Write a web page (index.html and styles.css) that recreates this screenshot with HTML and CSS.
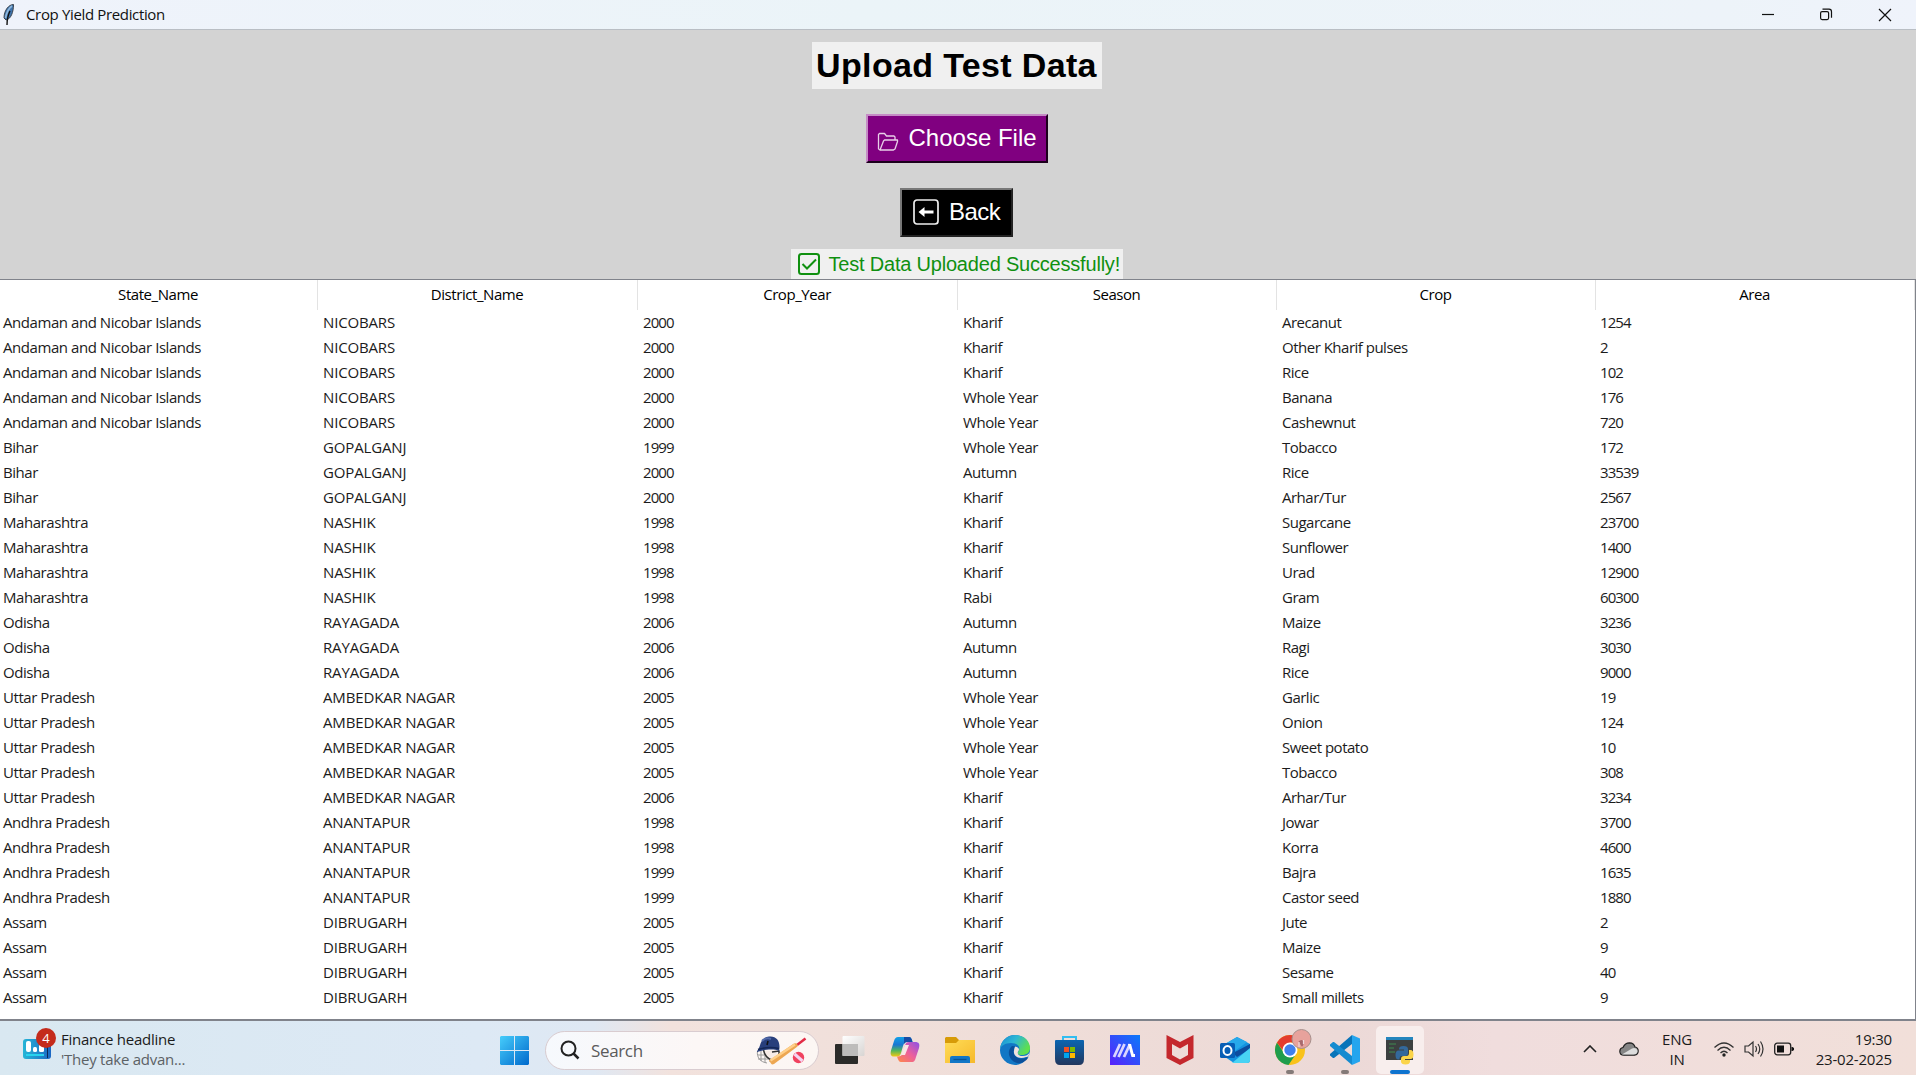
FILE: index.html
```html
<!DOCTYPE html>
<html lang="en">
<head>
<meta charset="utf-8">
<title>Crop Yield Prediction</title>
<link rel="stylesheet" href="styles.css">
</head>
<body>
<div class="window">
<header class="titlebar">
  <svg class="feather" width="16" height="22" viewBox="0 0 16 22"><path d="M13.500 1.500C9 1.500 4 7 4 15l2 2C11 16 13.500 9 13.500 1.500z" fill="#3f74ad" stroke="#3b434c" stroke-width="1"/><path d="M12 3C9 5 6.500 10 5.500 15" stroke="#8fb8dd" stroke-width="1.600" fill="none"/><path d="M10 8C8 12 7 15 7 22" stroke="#111" stroke-width="1.400" fill="none"/></svg>
  <h1 class="caption">Crop Yield Prediction</h1>
  <svg class="controls" width="130" height="14" viewBox="0 0 130 14" fill="none" stroke="#111" stroke-width="1.2"><path d="M0 6.5h12"/><rect x="58.600" y="3.600" width="8" height="8" rx="1.500"/><path d="M60.500 1.200h6.500a2.500 2.500 0 0 1 2.500 2.500v6"/><path d="M117 1l12 12M129 1l-12 12"/></svg>
</header>
<main class="panel">
  <h2 class="heading"><span>Upload Test Data</span></h2>
  <button class="btn choose"><svg width="22" height="20" viewBox="0 0 22 20" fill="none" stroke="#e8cfe8" stroke-width="1.300" stroke-linejoin="round"><path d="M3.500 18L1.500 17V2.500L2.500 1.500h5l2 2.500h7.500l1 1v3"/><path d="M3 18L6.500 9l1-1h13v1.500L18 17l-1.500 1z"/></svg><span>Choose File</span></button>
  <button class="btn back"><svg width="26" height="26" viewBox="0 0 26 26"><rect x="1" y="1" width="24" height="24" rx="3" fill="none" stroke="#eee" stroke-width="1.700"/><path d="M5.500 13l6-5v3.500h9v3h-9V18z" fill="#fff"/></svg><span>Back</span></button>
  <p class="status"><svg width="22" height="22" viewBox="0 0 22 22" fill="none" stroke="#109010" stroke-width="2"><rect x="1" y="1" width="20" height="20" rx="2.500"/><path d="M4.500 11l4.500 4.500 9-9"/></svg><span>Test Data Uploaded Successfully!</span></p>
</main>
<table class="grid">
<thead><tr><th>State_Name</th><th>District_Name</th><th>Crop_Year</th><th>Season</th><th>Crop</th><th>Area</th></tr></thead>
<tbody>
<tr><td>Andaman and Nicobar Islands</td><td>NICOBARS</td><td>2000</td><td>Kharif</td><td>Arecanut</td><td>1254</td></tr>
<tr><td>Andaman and Nicobar Islands</td><td>NICOBARS</td><td>2000</td><td>Kharif</td><td>Other Kharif pulses</td><td>2</td></tr>
<tr><td>Andaman and Nicobar Islands</td><td>NICOBARS</td><td>2000</td><td>Kharif</td><td>Rice</td><td>102</td></tr>
<tr><td>Andaman and Nicobar Islands</td><td>NICOBARS</td><td>2000</td><td>Whole Year</td><td>Banana</td><td>176</td></tr>
<tr><td>Andaman and Nicobar Islands</td><td>NICOBARS</td><td>2000</td><td>Whole Year</td><td>Cashewnut</td><td>720</td></tr>
<tr><td>Bihar</td><td>GOPALGANJ</td><td>1999</td><td>Whole Year</td><td>Tobacco</td><td>172</td></tr>
<tr><td>Bihar</td><td>GOPALGANJ</td><td>2000</td><td>Autumn</td><td>Rice</td><td>33539</td></tr>
<tr><td>Bihar</td><td>GOPALGANJ</td><td>2000</td><td>Kharif</td><td>Arhar/Tur</td><td>2567</td></tr>
<tr><td>Maharashtra</td><td>NASHIK</td><td>1998</td><td>Kharif</td><td>Sugarcane</td><td>23700</td></tr>
<tr><td>Maharashtra</td><td>NASHIK</td><td>1998</td><td>Kharif</td><td>Sunflower</td><td>1400</td></tr>
<tr><td>Maharashtra</td><td>NASHIK</td><td>1998</td><td>Kharif</td><td>Urad</td><td>12900</td></tr>
<tr><td>Maharashtra</td><td>NASHIK</td><td>1998</td><td>Rabi</td><td>Gram</td><td>60300</td></tr>
<tr><td>Odisha</td><td>RAYAGADA</td><td>2006</td><td>Autumn</td><td>Maize</td><td>3236</td></tr>
<tr><td>Odisha</td><td>RAYAGADA</td><td>2006</td><td>Autumn</td><td>Ragi</td><td>3030</td></tr>
<tr><td>Odisha</td><td>RAYAGADA</td><td>2006</td><td>Autumn</td><td>Rice</td><td>9000</td></tr>
<tr><td>Uttar Pradesh</td><td>AMBEDKAR NAGAR</td><td>2005</td><td>Whole Year</td><td>Garlic</td><td>19</td></tr>
<tr><td>Uttar Pradesh</td><td>AMBEDKAR NAGAR</td><td>2005</td><td>Whole Year</td><td>Onion</td><td>124</td></tr>
<tr><td>Uttar Pradesh</td><td>AMBEDKAR NAGAR</td><td>2005</td><td>Whole Year</td><td>Sweet potato</td><td>10</td></tr>
<tr><td>Uttar Pradesh</td><td>AMBEDKAR NAGAR</td><td>2005</td><td>Whole Year</td><td>Tobacco</td><td>308</td></tr>
<tr><td>Uttar Pradesh</td><td>AMBEDKAR NAGAR</td><td>2006</td><td>Kharif</td><td>Arhar/Tur</td><td>3234</td></tr>
<tr><td>Andhra Pradesh</td><td>ANANTAPUR</td><td>1998</td><td>Kharif</td><td>Jowar</td><td>3700</td></tr>
<tr><td>Andhra Pradesh</td><td>ANANTAPUR</td><td>1998</td><td>Kharif</td><td>Korra</td><td>4600</td></tr>
<tr><td>Andhra Pradesh</td><td>ANANTAPUR</td><td>1999</td><td>Kharif</td><td>Bajra</td><td>1635</td></tr>
<tr><td>Andhra Pradesh</td><td>ANANTAPUR</td><td>1999</td><td>Kharif</td><td>Castor seed</td><td>1880</td></tr>
<tr><td>Assam</td><td>DIBRUGARH</td><td>2005</td><td>Kharif</td><td>Jute</td><td>2</td></tr>
<tr><td>Assam</td><td>DIBRUGARH</td><td>2005</td><td>Kharif</td><td>Maize</td><td>9</td></tr>
<tr><td>Assam</td><td>DIBRUGARH</td><td>2005</td><td>Kharif</td><td>Sesame</td><td>40</td></tr>
<tr><td>Assam</td><td>DIBRUGARH</td><td>2005</td><td>Kharif</td><td>Small millets</td><td>9</td></tr>
</tbody>
</table>
</div>
<footer class="taskbar">
  <div class="widget">
    <div class="widget-icon">
      <svg width="28" height="20" viewBox="0 0 28 20"><defs><linearGradient id="wg"><stop offset="0" stop-color="#26b5d6"/><stop offset="1" stop-color="#1b67c4"/></linearGradient></defs><rect width="28" height="20" rx="3" fill="url(#wg)"/><rect x="3" y="2" width="5" height="11" rx="2" fill="#fff"/><rect x="10" y="8" width="4" height="5" rx="1.500" fill="#fff"/><rect x="16" y="5" width="5" height="8" rx="1.500" fill="#fff"/><path d="M3 16h18" stroke="#27d3ee" stroke-width="2"/><path d="M24.500 8v11" stroke="#0b2957"/></svg>
      <span class="badge">4</span>
    </div>
    <div class="widget-text"><div class="w1">Finance headline</div><div class="w2">'They take advan...</div></div>
  </div>
  <div class="apps">
    <svg class="start" width="29" height="29" viewBox="0 0 29 29"><defs><linearGradient id="win" x2="1" y2="1"><stop offset="0" stop-color="#46cdfb"/><stop offset="1" stop-color="#0069cc"/></linearGradient></defs><path d="M1 0H14V14H0V1zM15 0H28L29 1V14H15zM0 15H14V29H1L0 28zM15 15H29V28L28 29H15z" fill="url(#win)"/></svg>
    <div class="search">
      <svg width="20" height="20" viewBox="0 0 20 20" fill="none" stroke="#222" stroke-width="2"><circle cx="8.500" cy="8.500" r="7"/><path d="M13.500 13.500l5 5" stroke-width="2.500"/></svg>
      <span>Search</span>
      <svg class="cricket" width="52" height="32" viewBox="0 0 52 32"><g fill="none" stroke="#999" stroke-width="1"><path d="M2.500 17C1.500 23 5 28 12 29M3 21h12M3 25h13M6 17v10M10 18v11M15 18v10"/></g><path d="M8 17l13-1 1 6-6 5-5-3z" fill="#f7ece7"/><path d="M8.500 16c1 5 3 8 8 10M17 18l7-1v6" fill="none" stroke="#333" stroke-width="1.500"/><path d="M2 17C6 14 4 4 14 2.500 22 1.500 26 8 24 17c-5-2-12-2-22 1z" fill="#283f7c"/><path d="M7 7q4-4 9-2" stroke="#526aa9" stroke-width="2" fill="none"/><path d="M3 15.500c6-2 13-3 21-1" stroke="#142757" stroke-width="1.500" fill="none"/><path d="M13 7l-1 4" stroke="#111" stroke-width="1.500"/><path d="M50.500 4.500L42 11" stroke="#e22b45" stroke-width="2.500"/><path d="M14 26.500L39 9.500q4-1 3.500 3L19 30q-2 1-3-.5z" fill="#eda752"/><path d="M15.500 26.500L40 10.500" stroke="#ffd08b" stroke-width="2.500"/><circle cx="43.500" cy="23.500" r="5.700" fill="#f0425f"/><path d="M39.500 20l8 7" stroke="#f4d4f0" stroke-width="3"/></svg>
    </div>
    <div class="app"><svg width="30" height="30" viewBox="0 0 30 30"><defs><linearGradient id="tv" x2="1" y2="1"><stop offset="0" stop-color="#fff"/><stop offset="1" stop-color="#d8d5d3"/></linearGradient></defs><rect x="0" y="9" width="23" height="20" rx="1" fill="#2b2b29"/><rect x="7.500" y="1" width="22" height="20" rx="1" fill="url(#tv)"/><path d="M7.500 9H23V21H7.500z" fill="#bdbcbb"/></svg></div>
    <div class="app"><svg width="30" height="30" viewBox="0 0 30 30"><defs><linearGradient id="ca" x2="0" y2="1"><stop offset="0" stop-color="#12a1e8"/><stop offset=".4" stop-color="#1976d2"/><stop offset=".7" stop-color="#52b65b"/><stop offset="1" stop-color="#f2c811"/></linearGradient><linearGradient id="cb" x1="1" x2="0" y2="1"><stop offset="0" stop-color="#8b50e8"/><stop offset=".5" stop-color="#ec5f9c"/><stop offset="1" stop-color="#ff8b45"/></linearGradient></defs><path d="M8 2h11c2 0 3 2 3.500 5H17c-2 0-3 1-4 4l-2 7c-1 3-2 3.500-5 3.500H4c-3 0-4-2-3-6L4 6c1-3 2-4 4-4z" fill="url(#ca)"/><path d="M14 2h5c2 0 3 2 3.500 5H17q-2 0-3 2z" fill="#174ca5"/><path d="M22 27H11c-2 0-3-2-4-5.500 4 0 5-1 6-4l2-7c1-3 2-3.500 5-3.500h5c4 0 5 2 4 6l-3 9c-1 4-2 5-4 5z" fill="url(#cb)"/><path d="M15 10h4l-4 10h-4z" fill="#f8e7e7"/></svg></div>
    <div class="app"><svg width="30" height="30" viewBox="0 0 30 30"><defs><linearGradient id="fo" x2="1" y2="1"><stop offset="0" stop-color="#ffdc57"/><stop offset="1" stop-color="#f6b92b"/></linearGradient></defs><path d="M0 3l1-1h10l3 3H30v8H0z" fill="#d79b08"/><path d="M0 8h11l3-3h16v23H0z" fill="url(#fo)"/><path d="M5 28v-5q0-2 2-2h16q2 0 2 2v5z" fill="#1277c7"/><path d="M8.500 24.500h13" stroke="#075497" stroke-width="1.300"/></svg></div>
    <div class="app"><svg width="30" height="30" viewBox="0 0 30 30"><defs><linearGradient id="ed" y2=".5"><stop offset="0" stop-color="#168bd2"/><stop offset=".5" stop-color="#2eb7d4"/><stop offset="1" stop-color="#5fe04c"/></linearGradient></defs><circle cx="15" cy="15" r="15" fill="#1277c5"/><path d="M25 25l5-5v10h-8z" fill="#eddcd7"/><path d="M0 14C1 5 8 0 15 0c9 0 15 6 15 13 0 5-4 7-8 7-3 0-5-1-4-3 4-6-2-9-7-9C5 8 1 11 0 14z" fill="url(#ed)"/><path d="M12 11c-6 5-3 15 5 17 5 1 9-2 11-5 1-1 0-1-1-.500-8 3-15-1-13-8 0-2 1-3 2-3z" fill="#0b509b"/><path d="M15 11.500c4 1 5 3 3 5-1 3 1 4.500 5 4.500 3 0 5-1 7-4-1 4-2 5-4 5-7 3-13-1-12-6 0-2 1-4 1-4.500z" fill="#f1e1dc"/></svg></div>
    <div class="app"><svg width="30" height="30" viewBox="0 0 30 30"><defs><linearGradient id="st" x2="0" y2="1"><stop offset="0" stop-color="#0b65b1"/><stop offset="1" stop-color="#22375e"/></linearGradient></defs><path d="M8 7V2h13v5" fill="none" stroke="#32bdf0" stroke-width="2"/><path d="M0 6q0-1 1-1h27q1 0 1 1v18q0 6-5 6H5q-5 0-5-6z" fill="url(#st)"/><path d="M9 12h5v5H9z" fill="#f25022"/><path d="M15 12h5v5h-5z" fill="#7fba00"/><path d="M9 18h5v5H9z" fill="#00a4ef"/><path d="M15 18h5v5h-5z" fill="#ffb900"/></svg></div>
    <div class="app"><svg width="30" height="30" viewBox="0 0 30 30"><defs><linearGradient id="ma" x1="0" y1="1" x2="1" y2="0"><stop offset="0" stop-color="#5a20fb"/><stop offset="1" stop-color="#0b7bfa"/></linearGradient></defs><path d="M0 0h30v30H0z" fill="url(#ma)"/><path d="M4 22L10 9M8.500 22l6-13M14 22l6-13" stroke="#dcd6ff" stroke-width="2.800"/><path d="M18 9h3l3.500 13h-3z" fill="#fff"/><path d="M22 19h3v3h-3z" fill="#fff"/></svg></div>
    <div class="app"><svg width="30" height="30" viewBox="0 0 30 30"><path d="M1.500 0L15 7 28.500 0v23L15 30 1.500 23zM7 9v11l8 4.500 8-4.500V9l-8 4.500z" fill="#c4282d" fill-rule="evenodd"/></svg></div>
    <div class="app"><svg width="30" height="30" viewBox="0 0 30 30"><path d="M5 9L17 2l13 7v16q0 3-3 3H14L5 22z" fill="#1492df"/><path d="M5 9L17 2l10 5-12 9H5z" fill="#27a9ea"/><path d="M13 18L30 9v5L17 22z" fill="#0d4c9e"/><path d="M12 28L30 13v12q0 3-3 3z" fill="#48d3f4"/><rect y="8" width="15" height="15" rx="1.500" fill="#075eb5"/><ellipse cx="7.500" cy="15.500" rx="4" ry="4.500" fill="none" stroke="#fff" stroke-width="2"/></svg></div>
    <div class="app running"><svg class="overflowing" width="30" height="30" viewBox="0 0 30 30"><circle cx="15" cy="15" r="15" fill="#f9c21a"/><path d="M2 7.500A15 15 0 0 0 13.500 30L21 19 15 15 9 18z" fill="#1f9d4d"/><path d="M2 7.500L7.500 15 15 7.500h13A15 15 0 0 0 2 7.500z" fill="#e33b2e"/><circle cx="15" cy="15" r="7.500" fill="#fff"/><circle cx="15" cy="15" r="5.700" fill="#3f80ed"/><circle cx="26.500" cy="4" r="9.500" fill="#e7a29c" stroke="#a7908d"/><path d="M23.500 6.500q3-3 5.500 0l-1 4q-1 2-2 0z" fill="#a8696c"/><path d="M24 7v5M28.500 5v4" stroke="#efdadd" stroke-width="1.200"/></svg></div>
    <div class="app running"><svg width="30" height="30" viewBox="0 0 30 30"><path d="M22 0v9L4 23H3l-3-2.500V19z" fill="#0874b9"/><path d="M22 30v-9L4 7H3L0 9.500V11z" fill="#148bd0"/><path d="M22 0l8 3.500v23L22 30z" fill="#25a5ee"/></svg></div>
    <div class="app active"><svg width="30" height="30" viewBox="0 0 30 30"><path d="M1 2h27v23H1z" fill="#3c4040"/><path d="M1 2h27v3H1z" fill="#2485bd"/><path d="M4 9h7M4 13h5M4 17h6" stroke="#3e8b50"/><path d="M14 14q0-3 4.500-3t4.500 3v4q0 3-3 3h-3.500q-2 0-2 3.500h-1q-3 0-3-4.500t3-4.500H19v-1h-5z" fill="#33689b"/><path d="M24 15h1.500q3 0 3 4.500t-3 4.500H20v1h5v1.500q0 3-4.500 3T16 26.500V24q0-3 3-3h2.500q2.500 0 2.500-3z" fill="#fbd449"/></svg></div>
  </div>
  <div class="tray">
    <svg class="chev" width="14" height="8" viewBox="0 0 14 8" fill="none" stroke="#222" stroke-width="1.600"><path d="M1 7l6-6 6 6"/></svg>
    <svg class="cloud" width="20" height="14" viewBox="0 0 20 14"><path d="M5 13.200q-4.200 0-4.200-4Q1 6 4 5.500 6 .8 10.500.8 15 1 16 5q3.200.5 3.200 4t-3.700 4.200z" fill="#858585" stroke="#222" stroke-width="1.200"/><path d="M3 12.500L13 6.500q2-1 4 0 2 1 1.500 3.500-1 2.500-4 2.500z" fill="#ddd"/></svg>
    <div class="lang"><div>ENG</div><div>IN</div></div>
    <svg class="wifi" width="20" height="15" viewBox="0 0 20 15" fill="none" stroke="#333" stroke-width="1.300"><path d="M.5 5.500q9.500-9 19 0M3.500 8.500q6.500-6.500 13 0M6.500 11q3.500-3.500 7 0"/><circle cx="10" cy="13" r="1.700" fill="#222" stroke="none"/></svg>
    <svg class="vol" width="20" height="18" viewBox="0 0 20 18" fill="none" stroke="#333" stroke-width="1.200"><path d="M1 6h3.500L9 2v14l-4.500-4H1z"/><path d="M11.500 6q2 3 0 6M14 4q3.500 5 0 10M16.500 1.500q5 7.500 0 15"/></svg>
    <svg class="bat" width="20" height="14" viewBox="0 0 20 14"><rect x=".7" y="1.200" width="16" height="11.600" rx="2.500" fill="none" stroke="#222" stroke-width="1.300"/><rect x="3" y="3.500" width="7" height="7" fill="#111"/><path d="M17.500 5h1l1.500 1v2l-1.500 1h-1z" fill="#111"/></svg>
    <div class="clock"><div>19:30</div><div>23-02-2025</div></div>
  </div>
</footer>
</body>
</html>
```
FILE: styles.css
```css
* { box-sizing: border-box; }
body { margin: 0; width: 1916px; height: 1075px; overflow: hidden; display: flex; flex-direction: column; font-family: "Open Sans", "Noto Sans", sans-serif; color: #1b1b1b; }
.window { height: 1021px; flex: none; display: flex; flex-direction: column; }
.titlebar { height: 30px; flex: none; display: flex; align-items: center; background: linear-gradient(90deg, #eff3fb, #ebf4f8 45%, #edf3f9 90%, #eff3fb); border-bottom: 1px solid #b9bec4; padding-right: 24px; }
.feather { margin: -2px 10px 0 0; }
.caption { margin: -2px 0 0; font-size: 15px; font-weight: 400; line-height: 20px; letter-spacing: -.35px; color: #111; }
.controls { margin-left: auto; }
.panel { height: 249px; flex: none; background: #d3d3d3; display: flex; flex-direction: column; align-items: center; padding: 12px 3px 0 0; font-family: "Liberation Sans", Arial, sans-serif; }
.heading { margin: 0 0 25px; width: 290px; height: 47px; background: #f0f0f0; color: #000; font-size: 34px; line-height: 46px; letter-spacing: .35px; text-align: center; white-space: nowrap; }
.btn { flex: none; height: 49px; display: flex; align-items: center; font: 24px/28px "Liberation Sans", Arial, sans-serif; color: #fff; border-radius: 0; padding: 0 0 2px; white-space: nowrap; }
.choose { width: 182px; margin: 0 0 25px; background: #800080; border: 2px solid; border-color: #c58bc5 #1c001c #1c001c #c58bc5; padding-left: 9px; gap: 10px; }
.choose svg { margin-top: 8px; }
.back { width: 113px; background: #000; border: 2px solid; border-color: #777 #222 #222 #777; padding-left: 11px; gap: 10px; margin-bottom: 12px; letter-spacing: -.5px; }
.status { margin: 0; width: 332px; height: 30px; background: #f0f0f0; color: #109010; display: flex; align-items: center; gap: 9px; padding-left: 7px; font-size: 20px; letter-spacing: -.2px; white-space: nowrap; }
.grid { width: 1916px; height: 742px; border-spacing: 0; background: #fff; border: 1px solid #80838b; border-left: 0; border-bottom: 2px solid #80838b; display: block; font-size: 15px; }
.grid thead, .grid tbody { display: block; }
.grid tr { display: grid; grid-template-columns: 318px 320px 320px 319px 319px 319px; height: 25px; }
.grid thead tr { height: 30px; }
.grid th, .grid td { padding: 0 0 0 3px; line-height: 24px; font-weight: 400; white-space: nowrap; text-align: left; letter-spacing: -.44px; }
.grid td + td { padding-left: 5px; }
.grid td:nth-child(2) { letter-spacing: -.15px; }
.grid td:nth-child(3), .grid td:nth-child(6) { letter-spacing: -.9px; }
.grid td:nth-child(6) { padding-left: 4px; }
.grid td:nth-child(5) { letter-spacing: -.5px; }
.grid th { padding: 0 1px 0 0; line-height: 28px; text-align: center; color: #000; border-right: 1px solid #e3e3e3; }
.taskbar { height: 54px; flex: none; display: flex; align-items: center; background: linear-gradient(90deg, #d9e8f1, #dde9f5 25%, #dfe8f3 31%, #f2e2dd 35%, #efddd8 55%, #ecd9d7 70%, #f0dddd 78%, #f1dfd9); }
.widget { width: 500px; display: flex; padding: 2px 0 0 23px; gap: 10px; align-items: center; }
.widget-icon { position: relative; width: 28px; height: 20px; }
.badge { position: absolute; left: 13px; top: -11px; width: 20px; height: 20px; border-radius: 50%; background: #c42b1c; color: #fff; font-size: 13px; line-height: 20px; text-align: center; }
.widget-text { font-size: 15px; line-height: 20px; letter-spacing: -.25px; }
.w2 { color: #5c6266; }
.apps { display: flex; align-items: center; height: 54px; padding-top: 4px; }
.search { width: 274px; height: 39px; margin: 0 7px 0 16px; border-radius: 20px; border: 1px solid #d9ccd0; background: linear-gradient(90deg, #f6f9fd, #fcf7f6 55%, #fcf6f3); display: flex; align-items: center; padding: 0 11px 0 14px; font-size: 17px; letter-spacing: -.35px; color: #5b5b5b; }
.search span { margin-left: 11px; }
.cricket { margin-left: auto; }
.app { width: 48px; height: 48px; margin-right: 7px; display: flex; align-items: center; justify-content: center; position: relative; flex: none; }
.running::after, .active::after { content: ""; position: absolute; bottom: 0; left: 20px; width: 8px; height: 4px; border-radius: 2px; background: #847a78; }
.overflowing { overflow: visible; }
.active { background: #f8eeed; border-radius: 5px; }
.active::after { left: 14px; width: 20px; background: #0f74cf; }
.tray { margin-left: auto; display: flex; align-items: center; padding: 2px 24px 0 0; font-size: 15px; line-height: 20px; letter-spacing: -.2px; }
.chev { margin-right: 22px; }
.cloud { margin-right: 23px; }
.lang { text-align: center; width: 30px; margin-right: 22px; }
.wifi, .vol { margin-right: 10px; }
.bat { margin-right: 11px; }
.clock { width: 87px; text-align: right; }
```
